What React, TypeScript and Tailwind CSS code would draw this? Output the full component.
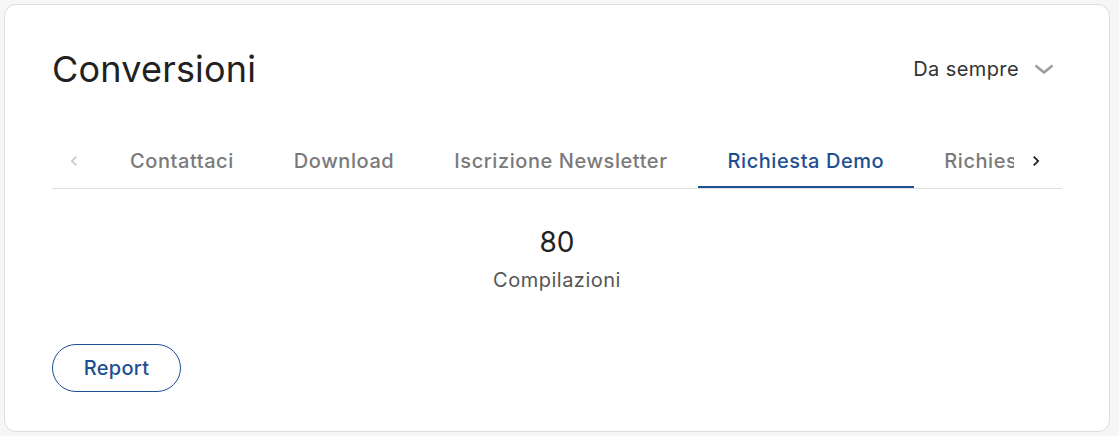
import { useState } from "react";

const tabs = ["Contattaci", "Download", "Iscrizione Newsletter", "Richiesta Demo", "Richiesta Preventivo"];

function ChevronLeft({ className }: { className?: string }) {
  return (
    <svg viewBox="0 0 24 24" className={className} fill="currentColor">
      <path d="M15.41 7.41L14 6l-6 6 6 6 1.41-1.41L10.83 12z" />
    </svg>
  );
}

function ChevronRight({ className }: { className?: string }) {
  return (
    <svg viewBox="0 0 24 24" className={className} fill="currentColor">
      <path d="M10 6L8.59 7.41 13.17 12l-4.58 4.59L10 18l6-6z" />
    </svg>
  );
}

export default function App() {
  const [active, setActive] = useState(3);

  return (
    <div className="min-h-screen bg-[#f6f6f6] p-1 font-['Inter','Liberation_Sans',sans-serif]">
      <div className="w-[1106px] h-[428px] bg-white border border-[#dedede] rounded-xl px-[47px] pt-[42px]">
        <div className="flex items-center justify-between">
          <h2 className="text-[36px] leading-[44px] tracking-[0.2px] text-[#212121]">Conversioni</h2>
          <button className="flex items-center gap-[15px] text-[20px] leading-6 tracking-[0.4px] text-[#333] pr-2">
            Da sempre
            <svg viewBox="0 0 20 10" className="w-[20px] h-[10px] text-[#9e9e9e]" fill="none" stroke="currentColor" strokeWidth="2.6">
              <path d="M1.5 1.5 10 8.5 18.5 1.5" />
            </svg>
          </button>
        </div>

        <div className="mt-[43px] flex h-[55px] border-b border-[#e0e0e0]">
          <button className="w-12 pr-1 flex items-center justify-center text-[#c8c8c8]">
            <ChevronLeft className="w-5 h-5" />
          </button>
          <div className="flex-1 flex overflow-hidden">
            {tabs.map((t, i) => (
              <button
                key={t}
                onClick={() => setActive(i)}
                className={
                  "relative shrink-0 px-[30px] flex items-center text-[20px] tracking-[0.02857em] font-medium whitespace-nowrap " +
                  (i === active ? "text-[#1e4f91]" : "text-[#7a7a7a]")
                }
              >
                {t}
                {i === active && <span className="absolute left-0 right-0 -bottom-px h-[3px] bg-[#1e4f91]" />}
              </button>
            ))}
          </div>
          <button className="w-12 pr-1 flex items-center justify-center text-[#1a1a1a]">
            <ChevronRight className="w-5 h-5" />
          </button>
        </div>

        <div className="mt-[37px] flex flex-col items-center">
          <div className="text-[28px] leading-8 text-[#212121]">80</div>
          <div className="mt-[10px] text-[20px] leading-6 tracking-[0.5px] text-[#555]">Compilazioni</div>
        </div>

        <button className="mt-[52px] w-[129px] h-12 rounded-full border border-[#1e4f91] text-[#1e4f91] text-[20px] tracking-[0.3px] font-medium">
          Report
        </button>
      </div>
    </div>
  );
}
